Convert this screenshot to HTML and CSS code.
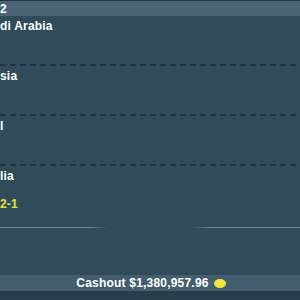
FILE: index.html
```html
<!DOCTYPE html>
<html lang="en">

<head>
  <meta charset="UTF-8" />
  <meta name="viewport" content="width=device-width, initial-scale=1.0" />
  <title>Bet slip</title>
  <link rel="stylesheet" href="styles.css">
</head>

<body>
  <div class="slip">
    <div class="slip-head">
      <p>2</p>
    </div>

    <div class="leg">
      <p class="team">di Arabia</p>
    </div>
    <div class="leg">
      <p class="team">sia</p>
    </div>
    <div class="leg">
      <p class="team">l</p>
    </div>
    <div class="leg last">
      <p class="team">lia</p>
      <p class="score">2-1</p>
    </div>

    <div class="divider"></div>

    <div class="cashout">
      <p>Cashout $1,380,957.96</p>
      <span class="coin"></span>
    </div>
    <div class="slip-foot"></div>
  </div>
</body>

</html>
```

FILE: styles.css
```css
body {
  margin: 0;
  background-color: #304b5a;
  color: white;
  font-family: "Liberation Sans", Arial, sans-serif;
  font-weight: bold;
  font-size: 12px;
  letter-spacing: 0.2px;
}

p {
  margin: 0;
  line-height: 14px;
}

.slip {
  height: 300px;
  display: flex;
  flex-direction: column;
  overflow: hidden;
}

.slip-head {
  height: 15px;
  border-top: 1px solid #23363f;
  background-color: #4a6577;
  display: flex;
  align-items: center;
}

/* dashed separator under each leg */
.leg {
  height: 50px;
  padding-top: 3px;
  box-sizing: border-box;
  border-bottom: 2px solid transparent;
  background-image: repeating-linear-gradient(90deg, #1f3440 0 6px, transparent 6px 10px);
  background-size: 100% 2px;
  background-position: 0 100%;
  background-repeat: no-repeat;
  background-origin: border-box;
}

.leg.last {
  background-image: none;
  border-bottom: 0;
  height: auto;
}

.score {
  margin-top: 14px;
  color: #ece33d;
}

.divider {
  height: 1px;
  margin-top: 16px;
  background: linear-gradient(90deg, #70879a 0, #70879a 30%, transparent 36%, transparent 64%, #70879a 70%, #70879a 100%);
}

.cashout {
  margin-top: auto;
  height: 16px;
  background-color: #435e6e;
  display: flex;
  align-items: center;
  justify-content: center;
  gap: 5px;
  padding-left: 2px;
}

.coin {
  width: 12px;
  height: 9px;
  border-radius: 50%;
  background-color: #f3e643;
}

.slip-foot {
  height: 9px;
  background-color: #283e4a;
}
```
